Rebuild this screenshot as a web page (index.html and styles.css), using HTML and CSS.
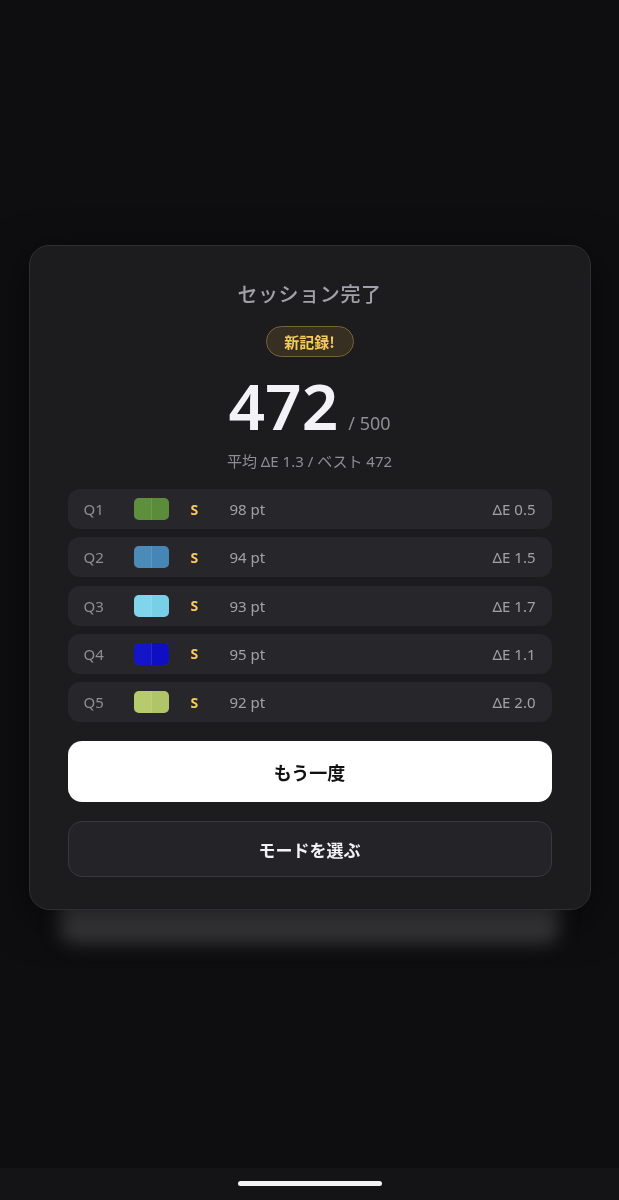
FILE: index.html
```html
<!DOCTYPE html>
<html lang="ja">
<head>
<meta charset="utf-8">
<title>セッション完了</title>
<link rel="stylesheet" href="styles.css">
</head>
<body>
<div class="page">
  <div class="bg-content">
    <div class="bg-button"></div>
  </div>
  <div class="home-area"><div class="home-bar"></div></div>
</div>

<div class="overlay">
  <div class="card">
    <h1 class="title">セッション完了</h1>
    <div class="badge-wrap"><span class="badge">新記録!</span></div>
    <div class="score"><span class="score-num">472</span><span class="score-max">/ 500</span></div>
    <p class="summary">平均 ΔE 1.3 / ベスト 472</p>

    <ul class="rows">
      <li class="row">
        <span class="q">Q1</span>
        <span class="swatch"><i style="background:#5e8f3d"></i><i style="background:#5a8c3a"></i></span>
        <span class="rank">S</span>
        <span class="pt">98 pt</span>
        <span class="de">ΔE 0.5</span>
      </li>
      <li class="row">
        <span class="q">Q2</span>
        <span class="swatch"><i style="background:#4a8bba"></i><i style="background:#4586b6"></i></span>
        <span class="rank">S</span>
        <span class="pt">94 pt</span>
        <span class="de">ΔE 1.5</span>
      </li>
      <li class="row">
        <span class="q">Q3</span>
        <span class="swatch"><i style="background:#80d5ec"></i><i style="background:#77cfe8"></i></span>
        <span class="rank">S</span>
        <span class="pt">93 pt</span>
        <span class="de">ΔE 1.7</span>
      </li>
      <li class="row">
        <span class="q">Q4</span>
        <span class="swatch"><i style="background:#1414c8"></i><i style="background:#0e0ec2"></i></span>
        <span class="rank">S</span>
        <span class="pt">95 pt</span>
        <span class="de">ΔE 1.1</span>
      </li>
      <li class="row">
        <span class="q">Q5</span>
        <span class="swatch"><i style="background:#b7ca6c"></i><i style="background:#afc567"></i></span>
        <span class="rank">S</span>
        <span class="pt">92 pt</span>
        <span class="de">ΔE 2.0</span>
      </li>
    </ul>

    <button class="btn btn-primary">もう一度</button>
    <button class="btn btn-secondary">モードを選ぶ</button>
  </div>
</div>
</body>
</html>
```

FILE: styles.css
```css
* { box-sizing: border-box; }

html, body {
  margin: 0;
  padding: 0;
  background: #0e0e10;
  font-family: "Noto Sans", "Noto Sans CJK JP", sans-serif;
  color: #f2f2f7;
}

.page {
  height: 1200px;
  display: flex;
  flex-direction: column;
}

.bg-content {
  flex: 1;
  padding: 884px 60px 0;
}

.bg-button {
  height: 58px;
  border-radius: 14px;
  background: #3e3e40;
  filter: blur(9px);
}

.home-area {
  height: 32px;
  background: #141416;
  display: flex;
  justify-content: center;
  padding-top: 13px;
}

.home-bar {
  width: 144px;
  height: 5px;
  border-radius: 3px;
  background: #f2f2f4;
}

.overlay {
  position: fixed;
  inset: 0 0 32px 0;
  display: flex;
  justify-content: center;
  align-items: flex-start;
  padding-top: 245px;
}

.card {
  width: 562px;
  background: #1c1c1f;
  border: 1px solid #2e2e33;
  border-radius: 20px;
  padding: 34px 38px 32px;
  display: flex;
  flex-direction: column;
  box-shadow: 0 10px 40px rgba(0, 0, 0, 0.55);
}

.title {
  margin: 0;
  text-align: center;
  font-family: "Noto Sans CJK JP", sans-serif;
  font-size: 20px;
  line-height: 28px;
  font-weight: 500;
  color: #a1a1a8;
  letter-spacing: 0.6px;
}

.badge-wrap {
  display: flex;
  justify-content: center;
  margin-top: 18px;
}

.badge {
  display: inline-flex;
  align-items: center;
  justify-content: center;
  width: 88px;
  height: 31px;
  border-radius: 16px;
  background: #372f22;
  border: 1px solid #7a6334;
  color: #f6c95c;
  font-family: "Noto Sans CJK JP", sans-serif;
  font-size: 15px;
  font-weight: 700;
}

.score {
  display: flex;
  justify-content: center;
  align-items: baseline;
  margin-top: 17px;
  height: 64px;
}

.score-num {
  font-size: 64px;
  line-height: 64px;
  font-weight: 600;
  color: #f2f2f7;
}

.score-max {
  font-size: 18px;
  color: #8e8e93;
  margin-left: 10px;
}

.summary {
  margin: 12px 0 0;
  text-align: center;
  font-size: 15px;
  line-height: 22px;
  color: #8e8e93;
}

.rows {
  list-style: none;
  margin: 17px 0 0;
  padding: 0;
  display: flex;
  flex-direction: column;
  gap: 8.3px;
}

.row {
  height: 40px;
  background: #27272b;
  border-radius: 12px;
  padding: 0 16px;
  display: flex;
  align-items: center;
  font-size: 15px;
  color: #8e8e93;
}

.q {
  width: 50px;
}

.swatch {
  width: 35px;
  height: 22px;
  border-radius: 5px;
  overflow: hidden;
  display: flex;
  box-shadow: inset 0 0 0 1px rgba(255, 255, 255, 0.18);
}

.swatch i {
  flex: 1;
  display: block;
}

.swatch i:first-child {
  border-right: 1px solid rgba(255, 255, 255, 0.1);
}

.rank {
  margin-left: 22px;
  width: 39px;
  font-size: 14px;
  font-weight: 700;
  color: #f6c95c;
}

.pt {
  flex: 1;
  color: #a1a1a6;
}

.de {
  color: #a1a1a6;
}

.btn {
  display: block;
  width: 100%;
  font-family: "Noto Sans CJK JP", sans-serif;
  font-weight: 700;
  border-radius: 14px;
  cursor: pointer;
}

.btn-primary {
  margin-top: 19px;
  height: 61px;
  background: #ffffff;
  border: none;
  color: #111113;
  font-size: 18px;
}

.btn-secondary {
  margin-top: 19px;
  height: 56px;
  background: #242428;
  border: 1px solid #38383d;
  color: #f2f2f7;
  font-size: 17px;
}
```
